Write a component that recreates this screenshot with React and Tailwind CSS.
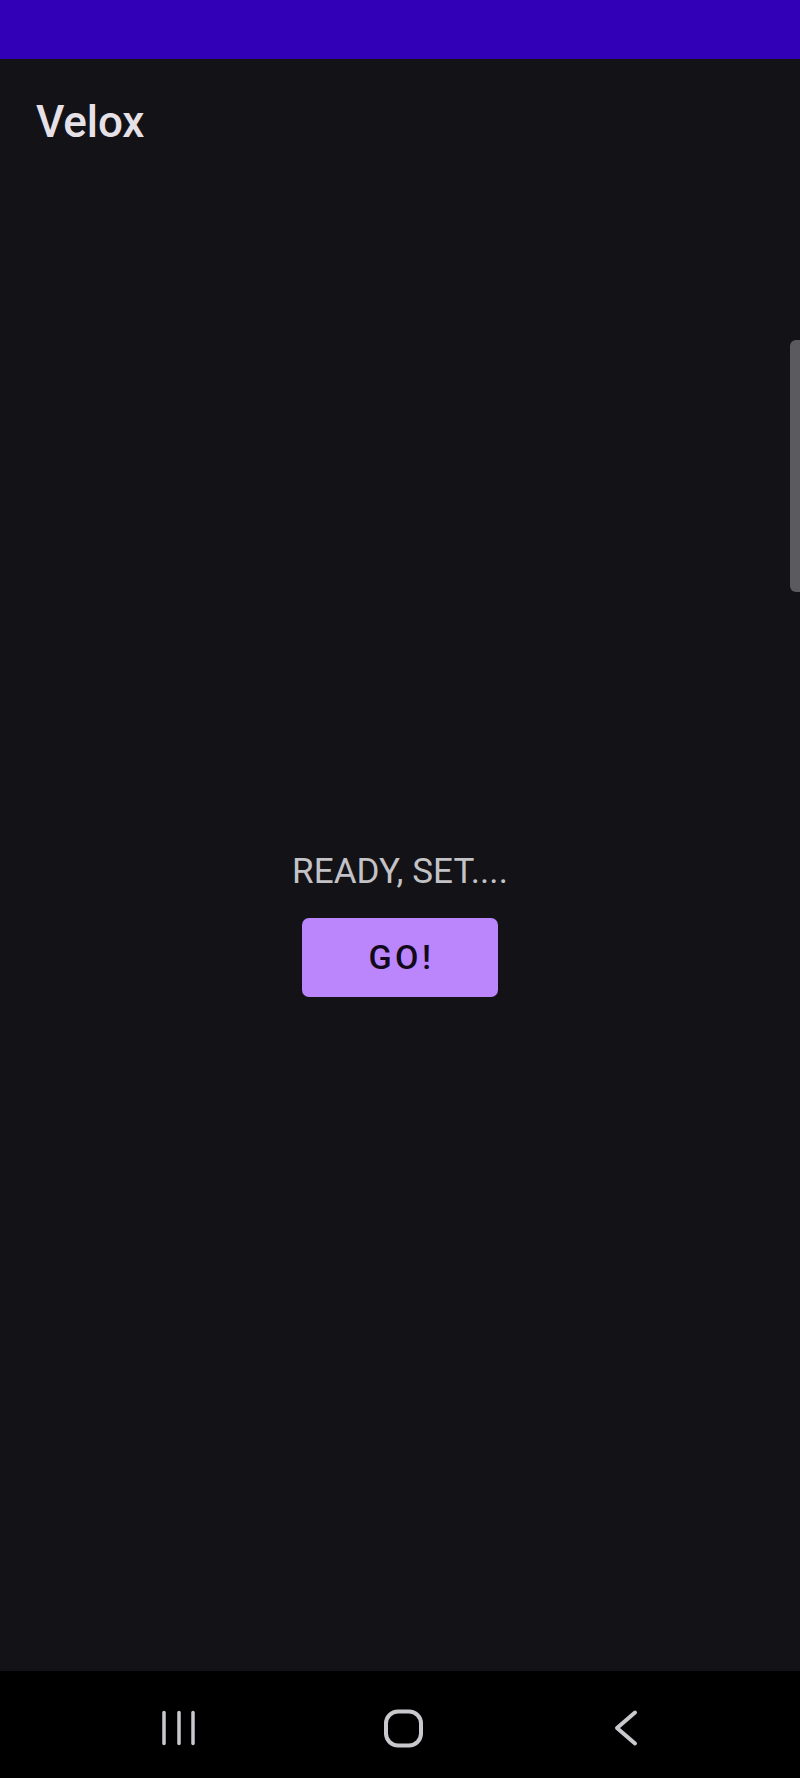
export default function App() {
  return (
    <div
      className="flex flex-col h-[1778px] w-[800px] bg-[#131217] overflow-hidden"
      style={{ fontFamily: 'Roboto, "Noto Sans", sans-serif' }}
    >
      {/* status bar */}
      <div className="h-[59px] bg-[#3200b6] shrink-0" />

      {/* toolbar */}
      <div className="h-[126px] shrink-0 flex items-center px-[36px]">
        <h1 className="text-[44px] font-medium text-[#e6e1e6] tracking-[-0.1px]">Velox</h1>
      </div>

      {/* content */}
      <div className="relative flex-1 flex flex-col items-center justify-center pb-[8px]">
        <div className="absolute right-0 top-[155px] w-[10px] h-[252px] bg-[#5b5a5f] rounded-l-[6px]" />
        <p className="text-[35px] leading-[40px] text-[#c3c2c6] tracking-[0.1px]">READY, SET....</p>
        <button className="mt-[26px] w-[196px] h-[79px] rounded-[7px] bg-[#bb86fc] text-[#120a1a] text-[34px] font-medium tracking-[3.5px] flex items-center justify-center pl-[3px]">
          GO!
        </button>
      </div>

      {/* nav bar */}
      <div className="h-[107px] shrink-0 bg-black flex items-center gap-[179px] pl-[158px] pt-[6px]">
        <svg width="44" height="44" viewBox="0 0 44 44">
          <g stroke="#c9c8cc" strokeWidth="3.5" strokeLinecap="round">
            <line x1="6" y1="6.5" x2="6" y2="37.5" />
            <line x1="21" y1="6.5" x2="21" y2="37.5" />
            <line x1="35" y1="6.5" x2="35" y2="37.5" />
          </g>
        </svg>
        <svg width="44" height="44" viewBox="0 0 44 44">
          <rect x="5" y="5.5" width="35" height="34" rx="12" fill="none" stroke="#c9c8cc" strokeWidth="4" />
        </svg>
        <svg width="44" height="44" viewBox="0 0 44 44">
          <polyline points="31,6.5 13,22 31,37.5" fill="none" stroke="#c9c8cc" strokeWidth="4" strokeLinecap="round" strokeLinejoin="round" />
        </svg>
      </div>
    </div>
  );
}
